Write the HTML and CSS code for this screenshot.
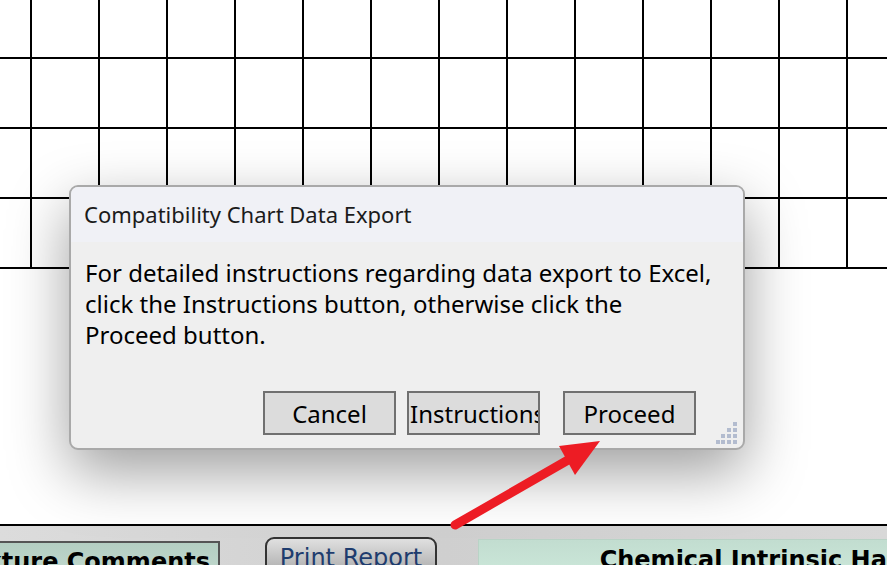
FILE: index.html
```html
<!DOCTYPE html>
<html lang="en">
<head>
  <meta charset="UTF-8">
  <title>Compatibility Chart</title>
  <link rel="stylesheet" href="styles.css">
</head>
<body>
  <div class="chart-grid"></div>
  <div class="gap"></div>

  <div class="report-bar">
    <div class="panel panel-left">Mixture Comments</div>
    <button class="print-btn">Print Report</button>
    <div class="panel panel-right">Chemical Intrinsic Hazards</div>
  </div>

  <!-- export dialog -->
  <div class="dialog">
    <div class="dialog-title">Compatibility Chart Data Export</div>
    <div class="dialog-body">
      <p>For detailed instructions regarding data export to Excel, click the Instructions button, otherwise click the Proceed button.</p>
      <div class="dialog-buttons">
        <button class="btn btn-cancel">Cancel</button>
        <button class="btn btn-instr">Instructions</button>
        <button class="btn btn-proceed">Proceed</button>
      </div>
    </div>
    <svg class="grip" width="24" height="26" viewBox="0 0 24 26">
      <g fill="#b3bccf">
        <rect x="17" y="1" width="4" height="4"/>
        <rect x="11" y="7" width="4" height="4"/>
        <rect x="17" y="7" width="4" height="4"/>
        <rect x="5" y="13" width="4" height="4"/>
        <rect x="11" y="13" width="4" height="4"/>
        <rect x="17" y="13" width="4" height="4"/>
        <rect x="0" y="19" width="4" height="4"/>
        <rect x="5" y="19" width="4" height="4"/>
        <rect x="11" y="19" width="4" height="4"/>
        <rect x="17" y="19" width="4" height="4"/>
      </g>
    </svg>
  </div>

  <svg class="arrow" width="887" height="565" viewBox="0 0 887 565">
    <line x1="455" y1="525" x2="575" y2="456" stroke="#ed1c24" stroke-width="9" stroke-linecap="round"/>
    <polygon points="600,441 559,446 575,475" fill="#ed1c24"/>
  </svg>
</body>
</html>
```

FILE: styles.css
```css
body {
  margin: 0;
  width: 887px;
  height: 565px;
  overflow: hidden;
  background: #fff;
  position: relative;
  font-family: 'Noto Sans', sans-serif;
}

.chart-grid {
  height: 269px;
  background-image:
    linear-gradient(to right, #000 2px, transparent 2px),
    linear-gradient(to bottom, #000 2px, transparent 2px);
  background-size: 68px 100%, 100% 70px;
  background-position: 30px 0, 0 57px;
}

.gap {
  height: 255px;
}

.report-bar {
  border-top: 2px solid #000;
  height: 60px;
  background: linear-gradient(to right, #dcdcdc, #cfcfcf 50%, #d8d8d8);
  display: flex;
  align-items: flex-start;
  font-family: 'DejaVu Sans', sans-serif;
}

.panel {
  font-weight: bold;
  font-size: 24px;
  color: #000;
  height: 40px;
  box-sizing: border-box;
  padding-top: 5px;
  white-space: nowrap;
}

.panel-left {
  margin-top: 15px;
  width: 320px;
  flex: none;
  margin-left: -100px;
  text-align: right;
  padding-right: 8px;
  background: linear-gradient(#b4cec2, #c2dacf);
  border: 2px solid #555;
}

.print-btn {
  flex: none;
  margin-top: 11px;
  margin-left: 45px;
  width: 172px;
  height: 40px;
  border: 2px solid #333;
  border-radius: 9px;
  background: linear-gradient(#e0e0e0, #a8a8a8);
  color: #1e3c6e;
  font-family: 'DejaVu Sans', sans-serif;
  font-size: 24px;
  padding: 2px 0 0;
  text-align: center;
  white-space: nowrap;
}

.panel-right {
  flex: none;
  width: 604px;
  margin-top: 13px;
  margin-left: 41px;
  text-align: center;
  background: linear-gradient(#c2ddd0, #cce8da);
  border: 1px solid #b9d3c6;
  padding-top: 6px;
}

/* dialog */
.dialog {
  position: absolute;
  left: 69px;
  top: 185px;
  width: 676px;
  height: 265px;
  box-sizing: border-box;
  border: 2px solid #a9a9a9;
  border-radius: 9px;
  background: #efefef;
  box-shadow: 0 22px 60px rgba(0, 0, 0, 0.38);
  overflow: hidden;
}

.dialog-title {
  height: 55px;
  background: #f0f1f6;
  padding: 12px 0 0 13px;
  box-sizing: border-box;
  font-size: 22px;
  color: #1b1b1b;
}

.dialog-body {
  padding: 0 14px;
}

.dialog-body p {
  margin: 15px 0 0;
  max-width: 630px;
  font-size: 24px;
  line-height: 31px;
  color: #000;
}

.dialog-buttons {
  display: flex;
  margin-top: 41px;
  margin-left: 178px;
}

.btn {
  height: 44px;
  width: 133px;
  box-sizing: border-box;
  border: 2px solid #707070;
  background: #dcdcdc;
  font-family: 'Noto Sans', sans-serif;
  font-size: 24px;
  color: #000;
  padding: 0;
  overflow: hidden;
  white-space: nowrap;
}

.btn-instr {
  margin-left: 11px;
  text-align: left;
  padding-left: 1px;
}

.btn-proceed {
  margin-left: 23px;
}

.grip {
  position: absolute;
  right: 3px;
  bottom: 1px;
}

.arrow {
  position: absolute;
  left: 0;
  top: 0;
  pointer-events: none;
}
```
